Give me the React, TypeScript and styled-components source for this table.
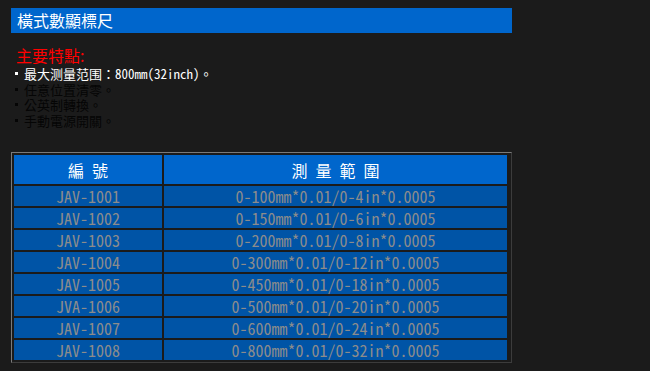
import { Fragment } from "react";
import styled, { createGlobalStyle } from "styled-components";

const GlobalStyle = createGlobalStyle`
    html, body {
        margin: 0;
        padding: 0;
        background: #1b1b1b;
    }
    body {
        font-family: "Noto Sans CJK TC", "Noto Sans", sans-serif;
    }
`;

const Page = styled.div`
    padding: 8px 0 0 11px;
    width: 501px;
`;

const TitleBar = styled.h1`
    margin: 0;
    height: 25px;
    padding-left: 6px;
    background: #0066cc;
    color: #ffffff;
    font-size: 16px;
    font-weight: normal;
    line-height: 25px;
`;

const Features = styled.section`
    margin-top: 12px;
    padding-left: 5px;
`;

const FeatureTitle = styled.h2`
    margin: 0;
    color: #ff0000;
    font-size: 16px;
    font-weight: normal;
    line-height: 20px;
`;

const FeatureList = styled.ul`
    margin: 1px 0 0;
    padding: 0;
    list-style: none;
`;

const Feature = styled.li<{ $bright?: boolean }>`
    display: flex;
    align-items: center;
    gap: 5px;
    height: 15.6px;
    font-size: 13px;
    line-height: 15.6px;
    color: ${(p) => (p.$bright ? "#ffffff" : "#050505")};

    &::before {
        content: "";
        width: 3px;
        height: 3px;
        background: currentColor;
        margin-left: -1px;
        margin-right: 1px;
    }
`;

const Mono = styled.span`
    font-family: "Noto Sans Mono CJK TC", "Liberation Mono", monospace;
    font-weight: normal;
`;

const Table = styled.div`
    margin-top: 24px;
    display: grid;
    grid-template-columns: 148px 343px;
    grid-template-rows: 29px;
    grid-auto-rows: 20px;
    gap: 2px;
    padding: 2px;
    width: 495px;
    border: 1px solid;
    border-color: #7a7a7a #3c3c3c #3c3c3c #7a7a7a;
`;

const HeadCell = styled.div`
    display: flex;
    align-items: center;
    justify-content: center;
    background: #0066cc;
    color: #ffffff;
    font-family: "Noto Sans Mono CJK TC", "Noto Sans CJK TC", monospace;
    font-size: 16px;
    white-space: pre;
`;

const Cell = styled.div`
    display: flex;
    align-items: center;
    justify-content: center;
    background: #0054a6;
    color: #8c8c8c;
    font-family: "Noto Sans Mono CJK TC", "Liberation Mono", monospace;
    font-size: 16px;
    line-height: 20px;
`;

const rows: [string, string][] = [
    ["JAV-1001", "0-100mm*0.01/0-4in*0.0005"],
    ["JAV-1002", "0-150mm*0.01/0-6in*0.0005"],
    ["JAV-1003", "0-200mm*0.01/0-8in*0.0005"],
    ["JAV-1004", "0-300mm*0.01/0-12in*0.0005"],
    ["JAV-1005", "0-450mm*0.01/0-18in*0.0005"],
    ["JVA-1006", "0-500mm*0.01/0-20in*0.0005"],
    ["JAV-1007", "0-600mm*0.01/0-24in*0.0005"],
    ["JAV-1008", "0-800mm*0.01/0-32in*0.0005"],
];

export default function App() {
    return (
        <>
            <GlobalStyle />
            <Page>
                <TitleBar>橫式數顯標尺</TitleBar>
                <Features>
                    <FeatureTitle>主要特點:</FeatureTitle>
                    <FeatureList>
                        <Feature $bright>
                            <span>
                                最大测量范围：<Mono>800mm(32inch)</Mono>。
                            </span>
                        </Feature>
                        <Feature>任意位置清零。</Feature>
                        <Feature>公英制轉換。</Feature>
                        <Feature>手動電源開關。</Feature>
                    </FeatureList>
                </Features>
                <Table>
                    <HeadCell>編 號</HeadCell>
                    <HeadCell>測 量 範 圍</HeadCell>
                    {rows.map(([code, range]) => (
                        <Fragment key={code}>
                            <Cell>{code}</Cell>
                            <Cell>{range}</Cell>
                        </Fragment>
                    ))}
                </Table>
            </Page>
        </>
    );
}
